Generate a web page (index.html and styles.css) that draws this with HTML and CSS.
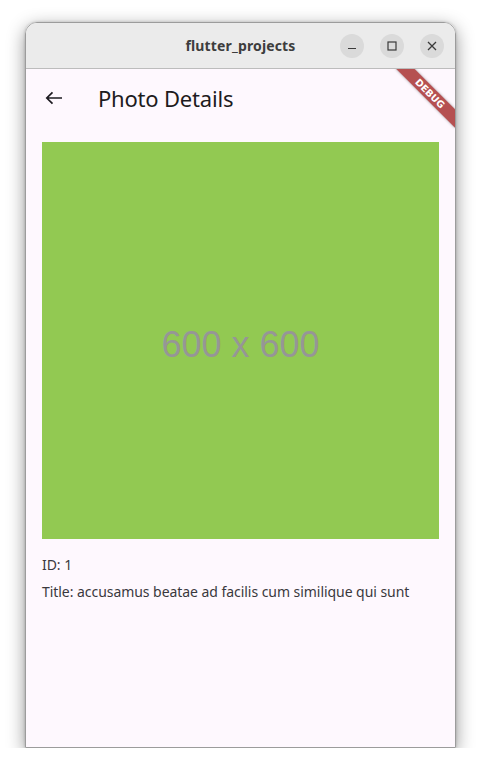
FILE: index.html
```html
<!DOCTYPE html>
<html>
<head>
<meta charset="utf-8">
<link rel="stylesheet" href="styles.css">
</head>
<body>
<div class="window">
  <div class="titlebar">
    <div></div>
    <div class="wtitle">flutter_projects</div>
    <div class="wbtns">
      <span class="wbtn"><svg width="10" height="10" viewBox="0 0 10 10"><path d="M1 7.5h8" stroke="#3a3a3a" stroke-width="1.2"/></svg></span>
      <span class="wbtn"><svg width="10" height="10" viewBox="0 0 10 10"><rect x="1" y="1" width="8" height="8" fill="none" stroke="#3a3a3a" stroke-width="1.2"/></svg></span>
      <span class="wbtn"><svg width="10" height="10" viewBox="0 0 10 10"><path d="M1 1l8 8M9 1l-8 8" stroke="#3a3a3a" stroke-width="1.3"/></svg></span>
    </div>
  </div>
  <div class="app">
    <div class="appbar">
      <div class="back"><svg width="24" height="24" viewBox="0 0 24 24"><path d="M20 12H4.8M10.5 6.3L4.8 12l5.7 5.7" fill="none" stroke="#1d1b20" stroke-width="1.7"/></svg></div>
      <div class="apptitle">Photo Details</div>
    </div>
    <div class="content">
      <div class="photo"><span class="phtext">600 x 600</span></div>
      <div class="line first">ID: 1</div>
      <div class="line">Title: accusamus beatae ad facilis cum similique qui sunt</div>
    </div>
    <div class="banner">DEBUG</div>
  </div>
</div>
</body>
</html>
```
FILE: styles.css
```css
html, body { margin: 0; padding: 0; background: #ffffff; }
body { font-family: "Noto Sans", "DejaVu Sans", sans-serif; }
.window {
  margin: 22px 0 0 25px;
  width: 431px;
  height: 726px;
  box-sizing: border-box;
  border: 1px solid #9c9c9c;
  border-radius: 12px 12px 0 0;
  overflow: hidden;
  box-shadow: 0 5px 18px rgba(0,0,0,0.42), 0 0 3px rgba(0,0,0,0.2);
  display: flex;
  flex-direction: column;
}
.titlebar {
  height: 46px;
  flex: none;
  box-sizing: border-box;
  background: #ebebeb;
  border-bottom: 1px solid #bcbcbc;
  display: grid;
  grid-template-columns: 1fr auto 1fr;
  align-items: center;
}
.wtitle {
  font-family: "Noto Sans", sans-serif;
  font-weight: 700;
  font-size: 14px;
  color: #3d3d3d;
  letter-spacing: 0.15px;
}
.wbtns {
  display: flex;
  justify-content: flex-end;
  gap: 16px;
  padding-right: 11px;
}
.wbtn {
  width: 24px;
  height: 24px;
  border-radius: 50%;
  background: #dadada;
  display: flex;
  align-items: center;
  justify-content: center;
}
.app {
  flex: 1;
  background: #fef8fe;
  position: relative;
  overflow: hidden;
}
.appbar {
  height: 57px;
  display: flex;
  align-items: center;
}
.back {
  width: 56px;
  height: 56px;
  display: flex;
  align-items: center;
  justify-content: center;
}
.apptitle {
  margin-left: 16px;
  font-size: 22px;
  color: #1d1b20;
  font-family: "Noto Sans", sans-serif;
  letter-spacing: -0.2px;
}
.content { padding: 16px; }
.photo {
  aspect-ratio: 1 / 1;
  background: #92c952;
  display: flex;
  align-items: center;
  justify-content: center;
}
.phtext {
  font-family: "Liberation Sans", Arial, sans-serif;
  font-size: 36px;
  color: #969696;
  padding-top: 8px;
}
.line {
  font-size: 14px;
  line-height: 19px;
  color: #3a383d;
  margin-top: 8px;
  letter-spacing: -0.05px;
}
.line.first { margin-top: 16px; }
.banner {
  position: absolute;
  top: 18px;
  right: -17px;
  width: 84px;
  height: 13px;
  transform: rotate(45deg);
  background: rgba(160,32,32,0.78);
  color: #fff;
  font-family: "DejaVu Sans", sans-serif;
  font-weight: 700;
  font-size: 9.5px;
  line-height: 13px;
  text-align: center;
  letter-spacing: 0px;
  box-shadow: 0 0 3px rgba(0,0,0,0.35);
}
```
